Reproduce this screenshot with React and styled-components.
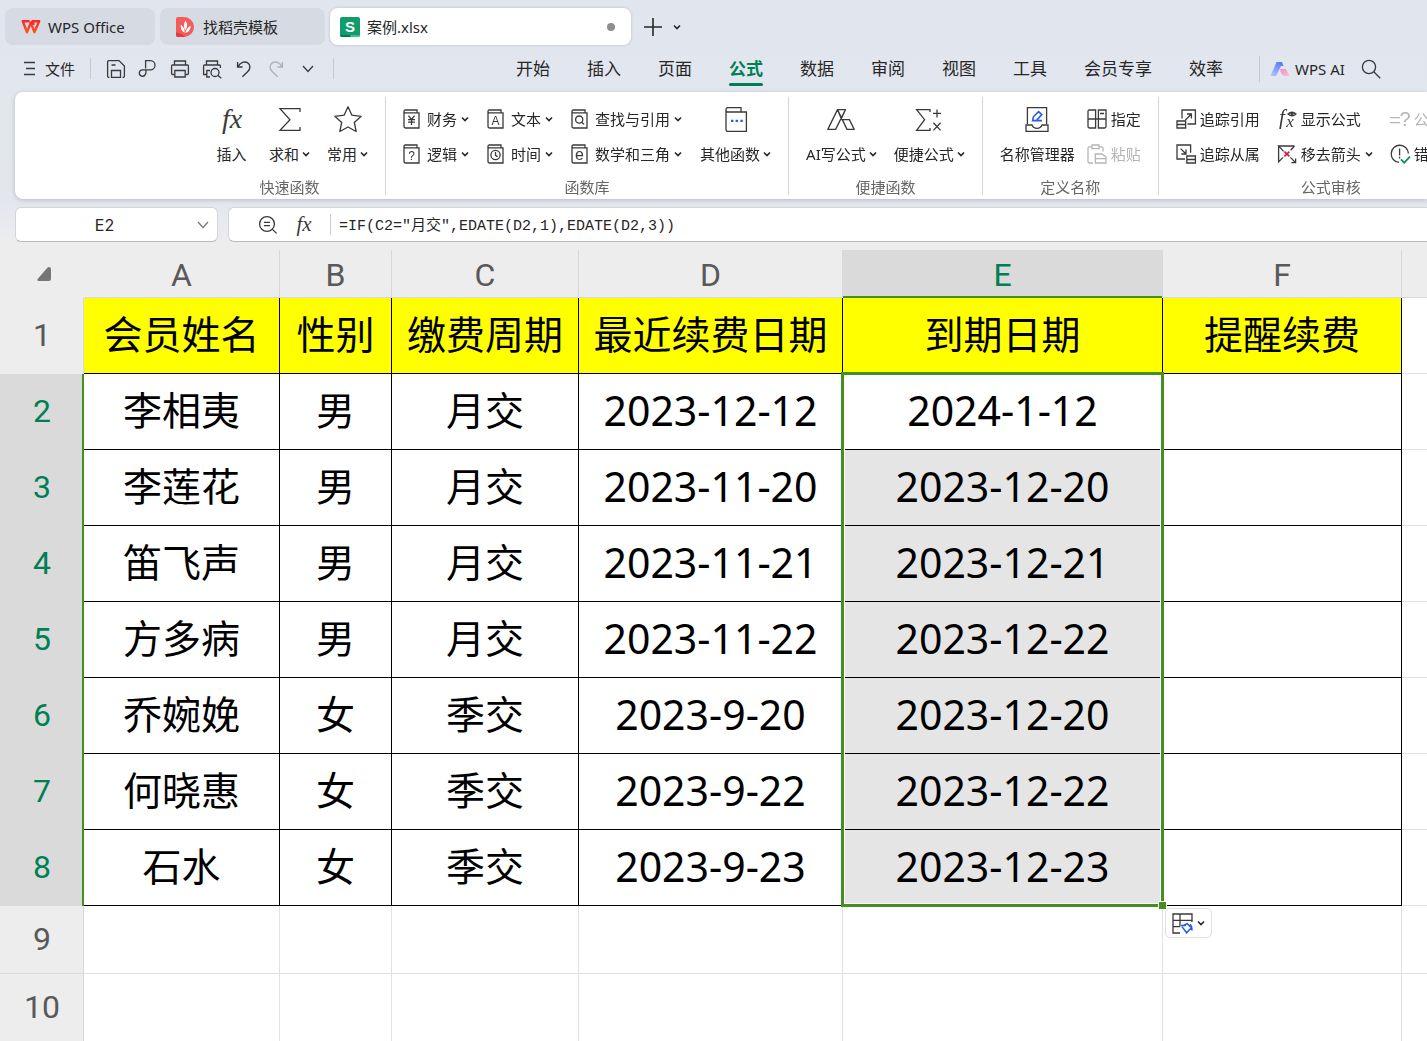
import styled, { createGlobalStyle, css } from "styled-components"

const GlobalStyle = createGlobalStyle`
    :root {
        --font-ui: "Noto Sans", "Noto Sans CJK SC", sans-serif;
        --color-text: #262626;
        --color-muted: #666666;
        --color-line: #d4d4d6;
        --color-green: #43901f;
        --color-teal: #007f55;
        --color-blue: #2b5ce6;
    }

    * {
        box-sizing: border-box;
    }

    body {
        margin: 0;
        overflow: hidden;
        background-color: #ededed;
        color: var(--color-text);
        font-family: var(--font-ui);
    }

    button, input {
        margin: 0;
        padding: 0;
        border: none;
        background: none;
        color: inherit;
        font: inherit;
    }

    svg {
        display: block;
        flex-shrink: 0;
        fill: none;
        overflow: visible;
    }
`

/* ---------- icons ---------- */

const Svg = ({ w = 20, h = 20, color = "#3a3a3a", sw = 1.3, children }) => (
    <svg width={w} height={h} viewBox={`0 0 ${w} ${h}`} stroke={color} strokeWidth={sw} aria-hidden="true">
        {children}
    </svg>
)

const Glyph = ({ x, y, size = 11, italic, color = "#3a3a3a", family = "Liberation Sans, sans-serif", children, ...rest }) => (
    <text
        x={x}
        y={y}
        fontSize={size}
        fontFamily={family}
        fontStyle={italic ? "italic" : "normal"}
        fill={color}
        stroke="none"
        textAnchor="middle"
        {...rest}
    >
        {children}
    </text>
)

const serif = "Liberation Serif, serif"

const Caret = () => (
    <Svg w={8} h={8} color="#262626" sw={1.6}><path d="M1 2.5 4 5.5 7 2.5" /></Svg>
)

const Chevron = ({ color = "#3a3a3a" }) => (
    <Svg w={12} h={8} color={color}><path d="M1 1 6 6.5 11 1" /></Svg>
)

const WpsLogo = () => (
    <Svg w={20} h={15} sw={2.4} color="url(#wpsRed)">
        <defs>
            <linearGradient id="wpsRed" x1="0" y1="0" x2="0" y2="15" gradientUnits="userSpaceOnUse">
                <stop offset="0" stopColor="#ff1f2d" />
                <stop offset="1" stopColor="#ff5a14" />
            </linearGradient>
        </defs>
        <path d="M8.6 2.2H1.8L6 13.2 9.8 3.6 13.4 13.2 18.2 2.2H11.4L12.8 6" strokeLinejoin="round" />
    </Svg>
)

const DocerLogo = () => (
    <Svg w={18} h={20} color="none">
        <path d="M0 2Q0 0 2 0H8A10 10 0 0 1 8 20H2Q0 20 0 18Z" fill="#f45b5b" />
        <path d="M0 15.5Q6 16 9 20H2Q0 20 0 18Z" fill="#e03c44" />
        <path d="M9.4 3.6C12.4 7.5 11 11.5 9 13.5 7.6 10 7.6 7 9.4 3.6Z" fill="#fff" />
        <path d="M4.8 7.8C7.6 9.8 8.6 12 8.8 15.8 5.2 14 4.6 11 4.8 7.8Z" fill="#fff" />
        <path d="M14.8 8.4C14.8 12 13 15 9.4 15.8 10 12.4 12 10.2 14.8 8.4Z" fill="#fff" />
    </Svg>
)

const SheetLogo = () => (
    <Svg w={20} h={20} color="none">
        <rect width="20" height="20" rx="2" fill="#119d6b" />
        <path d="M0 18H10L11 20H2Q0 20 0 18Z" fill="#007f4c" />
        <path d="M10 18H20Q20 20 18 20H11Z" fill="#43bd8c" />
        <Glyph x={10} y={14.5} size={15} color="#fff" fontWeight="700">S</Glyph>
    </Svg>
)

const MenuLines = () => (
    <Svg w={12} h={16}><path d="M0 1.5H11M2 7.5H11M0 13.5H11" /></Svg>
)

const SaveIcon = () => (
    <Svg>
        <path d="M3.5 18.3H2.6Q1.6 18.3 1.6 17.3V2.6Q1.6 1.6 2.6 1.6H13L18.4 7V17.3Q18.4 18.3 17.4 18.3H16.5" />
        <path d="M5.5 18.3V11.5H14.5V18.3ZM5.5 6H9.5" />
    </Svg>
)

const ShareIcon = () => (
    <Svg>
        <path d="M7.6 9.6V1.6H12.4A4.6 4.6 0 0 1 12.4 10.8H4.8A3.2 3.2 0 1 0 7.4 15.4Q8 14.4 8 12.8V10.8" strokeLinejoin="round" />
    </Svg>
)

const PrintIcon = () => (
    <Svg>
        <path d="M4.5 6V2H15.5V6M4.5 15.5H2.6Q1.6 15.5 1.6 14.5V7Q1.6 6 2.6 6H17.4Q18.4 6 18.4 7V14.5Q18.4 15.5 17.4 15.5H15.5" />
        <path d="M4.8 11.5H15.2V18H4.8Z" />
    </Svg>
)

const PreviewIcon = () => (
    <Svg>
        <path d="M4.5 6V2H15.5V6M4.5 15.5H1.6V7Q1.6 6 2.6 6H17.4Q18.4 6 18.4 7V9M8 18H4.8V11.5H8" />
        <circle cx="13" cy="13.5" r="4" />
        <path d="M16 16.5 19.3 19.3" />
    </Svg>
)

const UndoIcon = ({ flip, color }) => (
    <Svg color={color} sw={1.4}>
        <g transform={flip ? "translate(20 0) scale(-1 1)" : undefined}>
            <path d="M3.6 3V8H8.6M4 7.6C6.4 3.4 10.6 2 13.4 3.6 17 5.8 16.4 10 13.8 12.6L8.4 17.8" />
        </g>
    </Svg>
)

const PlusIcon = () => (
    <Svg color="#262626" sw={1.6}><path d="M1 10H19M10 1V19" /></Svg>
)

const AiLogo = () => (
    <Svg w={20} h={16} color="none">
        <defs>
            <linearGradient id="aiBlue" x1="0" y1="1" x2="0.7" y2="0">
                <stop offset="0" stopColor="#b9c7fb" />
                <stop offset="1" stopColor="#5b7cf7" />
            </linearGradient>
            <linearGradient id="aiPink" x1="0" y1="0" x2="1" y2="1">
                <stop offset="0" stopColor="#e58be8" />
                <stop offset="1" stopColor="#ffc2bd" />
            </linearGradient>
        </defs>
        <path d="M6.5 1H12L13.5 5H11L6 15H0.5Z" fill="url(#aiBlue)" />
        <path d="M10 8H16L19.5 15H14.5Q11 13.5 10 8Z" fill="url(#aiPink)" />
    </Svg>
)

const SearchIcon = () => (
    <Svg><circle cx="8" cy="8" r="6.6" /><path d="M12.8 12.8 19.2 19.2" /></Svg>
)

const FxIcon = () => (
    <Svg w={30} h={30}><Glyph x={15} y={23} size={28} italic family={serif}>fx</Glyph></Svg>
)

const SumIcon = () => (
    <Svg w={30} h={30}><path d="M25 7V3.6H5L15 14.7 5 25.4H25V22" /></Svg>
)

const StarIcon = () => (
    <Svg w={30} h={30}>
        <path d="M15 1.8 18.9 10.2 28.2 11.3 21.3 17.5 23.2 26.5 15 22 6.8 26.5 8.7 17.5 1.8 11.3 11.1 10.2Z" strokeLinejoin="round" />
    </Svg>
)

const BookIcon = ({ children }) => (
    <Svg>
        <path d="M1 2.6V17.6Q1 19 2.4 19H16V3.8H2.2Q1 3.8 1 2.6 1 1 2.4 1H14V3.8" />
        {children}
    </Svg>
)

const OtherIcon = () => (
    <Svg w={30} h={30}>
        <path d="M5 4.6V24.5Q5 26.4 7 26.4H25.4V7H6.4Q5 7 5 4.8 5 2.6 7 2.6H20V7" />
        <path d="M10 15.8H12.4M14.6 15.8H17M19.4 15.8H21.8" stroke="#2b5ce6" strokeWidth="2.2" />
    </Svg>
)

const AiWriteIcon = () => (
    <Svg w={30} h={30}>
        <path d="M11.5 4.6H19.5L9.6 24.4H1.8L11.5 4.6 21 24.4H28.2L23.4 14.6H15.6L11.5 4.6M15 14.5 19.5 4.6" strokeLinejoin="round" />
    </Svg>
)

const QuickIcon = () => (
    <Svg w={30} h={30}>
        <path d="M16 7V4.6H2.6L10.6 14.7 2.6 25.4H16V23M19 8.4H27M23 4.4V12.4M19.4 17.8 26.6 25.4M26.6 17.8 19.4 25.4" />
    </Svg>
)

const NameIcon = () => (
    <Svg w={30} h={30}>
        <path d="M5.4 19V2.6H24.6V19M4 20H10Q11.4 23.4 15 23.4T20 20H26V26.4H4Z" />
        <path d="M10.6 15.6 11.4 11.8 16.6 6.6 19.8 9.6 14.4 15.6ZM14.4 15.6H20" stroke="#2b5ce6" strokeWidth="1.6" />
    </Svg>
)

const AssignIcon = () => (
    <Svg>
        <path d="M8 1H2.4Q1 1 1 2.4V10H8.6V1ZM1 10V17.6Q1 19 2.4 19H8.6V10M11.4 1H19V10H11.4ZM8.6 10H11.4M11.4 10V19H17.6Q19 19 19 17.6V10M13 4.5H17" />
    </Svg>
)

const PasteIcon = () => (
    <Svg color="#b5b5b5">
        <path d="M5 2.8H2.4Q1 2.8 1 4.2V17.6Q1 19 2.4 19H6M12 2.8H14.6Q16 2.8 16 4.2V7.6M5 1H12V4.6H5Z" />
        <path d="M8.4 10H15L19 13V19H8.4ZM8.4 14.6H19" />
    </Svg>
)

const TraceInIcon = () => (
    <Svg>
        <path d="M6 9.5V1H19.4V15H11.5M1 12H9.6V19H1ZM1 15.5H9.6M9.4 11 15.4 5M11 5H15.4V9.6" />
    </Svg>
)

const TraceOutIcon = () => (
    <Svg>
        <path d="M9 15H1V1H14.6V8.8M10.8 12H19.4V19H10.8ZM10.8 15.5H19.4M4.6 4.6 10 10M10 5.4V10H5.4" />
    </Svg>
)

const ShowFormulaIcon = () => (
    <Svg>
        <Glyph x={5} y={15} size={21} italic family={serif}>f</Glyph>
        <Glyph x={13} y={18} size={17} italic family={serif}>x</Glyph>
        <path d="M11 5Q15 1.4 19 5 15 8.6 11 5Z" />
        <circle cx="15" cy="5" r="1" />
    </Svg>
)

const RemoveArrowIcon = () => (
    <Svg>
        <path d="M17.5 2H1.6L6.6 7.4M17.5 2 13.6 6.2M1.6 2V18L6 13.4M13.4 13.4 18.6 18.6M18.6 14.4V18.6H14.4" />
        <path d="M7.4 7.6 12.4 12.4M12.4 7.6 7.4 12.4" stroke="#d9143c" strokeWidth="1.6" />
    </Svg>
)

const EvaluateIcon = () => (
    <Svg color="#b5b5b5">
        <path d="M0 8.6H10M0 13.6H10" />
        <Glyph x={15} y={16.5} size={20} color="#b5b5b5">?</Glyph>
    </Svg>
)

const ErrorCheckIcon = () => (
    <Svg>
        <path d="M9 18.4A8.6 8.6 0 1 1 18.4 9.6M9.6 4.6V11.4M9.6 12.8V14.4" />
        <path d="M11 15.4 14.2 18.8 20 12.6" stroke="#0d8a5f" strokeWidth="1.8" />
    </Svg>
)

const ZoomIcon = () => (
    <Svg><circle cx="9" cy="9" r="7.4" /><path d="M14.4 14.4 18.6 18.4M6 7.4H12M6 10.6H12" /></Svg>
)

const PasteOptionsIcon = () => (
    <Svg w={21} h={21}>
        <path d="M8 20H1V1H20V9M1 7.4H20M1 13.6H8M8 1V13.6" />
        <path d="M9 12.4H14M10 13.6 14.6 19.8 19.4 14.8 15.2 10.6 11.4 12.4M18 11.4Q20 12.6 20 17.6" stroke="#2b5ce6" strokeWidth="1.5" />
    </Svg>
)

/* ---------- title bar ---------- */

const Window = styled.div`
    height: 100vh;
    display: flex;
    flex-direction: column;
    background: linear-gradient(#e1e6ee 0, #e3e6ef 200px, #ededed 244px);
`

const TitleBar = styled.header`
    display: flex;
    align-items: center;
    gap: 5px;
    padding: 8px 5px 0;
`

const FileTab = styled.button`
    display: flex;
    align-items: center;
    gap: ${({ $gap = 7 }) => $gap}px;
    width: ${({ $width }) => $width}px;
    height: 37px;
    padding: 0 ${({ $active }) => ($active ? "16px 0 10px" : "16px")};
    border-radius: 8px;
    background-color: ${({ $active }) => ($active ? "#ffffff" : "#d6dae2")};
    box-shadow: ${({ $active }) => ($active ? "0 0 3px #b4b8c2" : "none")};
    font-size: 15px;
    line-height: 20px;
    white-space: nowrap;

    & i {
        width: 8px;
        height: 8px;
        margin-left: auto;
        border-radius: 50%;
        background-color: #8f8f8f;
    }
`

const NewTab = styled.button`
    display: flex;
    align-items: center;
    padding-left: ${({ $pad = 0 }) => $pad}px;
`

/* ---------- menu ---------- */

const MenuBar = styled.nav`
    display: flex;
    align-items: center;
    height: 47px;
    padding-left: 24px;
    white-space: nowrap;
`

const FileButton = styled.button`
    display: flex;
    align-items: center;
    gap: 9px;
    padding-right: 15px;
    font-size: 15px;
`

const Divider = styled.span`
    width: 1px;
    height: ${({ $height = 21 }) => $height}px;
    background-color: #c8cad0;
`

const QuickTools = styled.div`
    display: flex;
    align-items: center;
    gap: 12px;
    padding: 0 15px;
`

const IconButton = styled.button`
    display: flex;
    align-items: center;
    justify-content: center;
    min-width: 20px;
`

const MenuTabs = styled.div`
    display: flex;
    gap: 37px;
    padding: 0 36px 0 182px;
`

const MenuTab = styled.button`
    position: relative;
    font-size: 17px;
    line-height: 24px;

    ${({ $active }) => $active && css`
        color: var(--color-teal);
        font-weight: 700;

        &::after {
            content: "";
            position: absolute;
            left: 0;
            right: 0;
            bottom: -5px;
            height: 3px;
            border-radius: 2px;
            background-color: var(--color-teal);
        }
    `}
`

const AiButton = styled.button`
    display: flex;
    align-items: center;
    gap: 5px;
    padding: 0 16px 0 10px;
    font-size: 15px;
`

/* ---------- ribbon ---------- */

const Ribbon = styled.section`
    display: flex;
    height: 107px;
    margin-left: 15px;
    padding: 5px 0 4px 179px;
    overflow: hidden;
    border-radius: 8px 0 0 8px;
    background-color: #ffffff;
`

const RibbonShadow = styled.div`
    filter: drop-shadow(0 1px 2px #b4b8c2);
`

const Group = styled.div`
    display: flex;
    flex-direction: column;
    flex-shrink: 0;
    justify-content: space-between;
    padding: 8px 17px 0;
    border-right: 1px solid var(--color-line);
`

const GroupItems = styled.div`
    display: flex;
    gap: ${({ $gap = 17 }) => $gap}px;
`

const GroupLabel = styled.div`
    color: var(--color-muted);
    font-size: 15px;
    line-height: 16px;
    text-align: center;
`

const Stack = styled.div`
    display: flex;
    flex-direction: column;
    align-items: flex-start;
    gap: 15px;
    padding-top: 4px;
`

const BigButton = styled.button`
    display: flex;
    flex-direction: column;
    align-items: center;
    gap: 9px;
    min-width: 41px;
    font-size: 15px;
    line-height: 20px;
    white-space: nowrap;

    & span {
        display: flex;
        align-items: center;
        gap: 3px;
    }
`

const SmallButton = styled.button`
    display: flex;
    align-items: center;
    gap: 4px;
    height: 20px;
    color: ${({ disabled }) => (disabled ? "#b5b5b5" : "inherit")};
    font-size: 15px;
    line-height: 20px;
    white-space: nowrap;
`

/* ---------- formula bar ---------- */

const FormulaRow = styled.div`
    display: flex;
    gap: 10px;
    padding: 8px 0 8px 15px;
`

const Field = styled.div`
    display: flex;
    align-items: center;
    height: 35px;
    border: 1px solid #d3d5da;
    border-bottom-color: #b9bbc0;
    border-radius: 6px;
    background-color: #ffffff;
`

const NameField = styled(Field)`
    width: 203px;
    padding-right: 4px;

    & input {
        flex: 1;
        min-width: 0;
        font-family: Inter, sans-serif;
        font-size: 16px;
        text-align: center;
    }
`

const FormulaField = styled(Field)`
    flex: 1;
    gap: 14px;
    padding-left: 29px;
    border-right: none;
    border-radius: 6px 0 0 6px;

    & input {
        flex: 1;
        margin-left: -6px;
        padding-bottom: 2px;
        font-family: "Liberation Mono", "Noto Sans CJK SC", monospace;
        font-size: 15px;
    }
`

/* ---------- sheet ---------- */

const SheetWrap = styled.main`
    flex: 1;
    overflow: hidden;
`

const Sheet = styled.table`
    width: 100%;
    table-layout: fixed;
    border-collapse: separate;
    border-spacing: 0;
    background-color: #ffffff;
`

const Corner = styled.th`
    height: 48px;
    padding: 0 33px 0 0;
    background-color: #ededed;

    & svg {
        margin-left: auto;
    }
`

const HeadCell = styled.th`
    border: 0 solid #d8d8d8;
    background-color: ${({ $selected }) => ($selected ? "#dadada" : "#ededed")};
    color: ${({ $selected }) => ($selected ? "var(--color-teal)" : "#595959")};
    font-family: Roboto, sans-serif;
    font-size: 32px;
    font-weight: 400;
`

const ColHead = styled(HeadCell)`
    height: 48px;
    padding: 2px 0 0;
    border-right-width: 1px;
    box-shadow: inset 0 ${({ $selected }) => ($selected ? "-2px var(--color-green)" : "-1px #d8d8d8")};

    &:last-child {
        border-right-width: 0;
    }
`

const RowHead = styled(HeadCell)`
    height: ${({ $height }) => $height}px;
    padding: 0 0 2px;
    border-bottom-width: ${({ $selected, $plain }) => ($selected || $plain ? 0 : 1)}px;
    box-shadow: inset ${({ $selected }) => ($selected ? "-2px 0 var(--color-green)" : "-1px 0 #d8d8d8")};
`

const Cell = styled.td`
    position: relative;
    padding: 0 0 3px;
    border-right: 1px solid #e1e1e1;
    border-bottom: 1px solid #e1e1e1;
    color: #000000;
    font-family: "Noto Sans", "Noto Sans CJK SC", sans-serif;
    font-size: ${({ $date }) => ($date ? 41 : 39)}px;
    line-height: 48px;
    text-align: center;
    white-space: nowrap;

    &:last-child {
        border-right: none;
    }

    ${({ $filled }) => $filled && css`
        border-color: #000000;
    `}

    ${({ $title }) => $title && css`
        background-color: #ffff00;
    `}

    ${({ $shaded }) => $shaded && css`
        background-color: #e5e5e5;
    `}
`

const Selection = styled.div`
    position: absolute;
    z-index: 1;
    top: -2px;
    left: -2px;
    width: calc(100% + 4px);
    height: ${({ $rows }) => $rows * 76 + 3}px;
    border: 3px solid var(--color-green);
    box-shadow: inset 0 0 0 1px #ffffff;
    pointer-events: none;

    &::after {
        content: "";
        position: absolute;
        right: -6px;
        bottom: -6px;
        width: 7px;
        height: 7px;
        border: 1px solid #ffffff;
        background-color: var(--color-green);
    }
`

const PasteOptions = styled.button`
    position: absolute;
    top: calc(100% + 4px);
    left: calc(100% + 4px);
    display: flex;
    align-items: center;
    gap: 4px;
    height: 30px;
    padding: 0 6px;
    border: 1px solid #e0e0e0;
    border-radius: 5px;
    background-color: #ffffff;
    pointer-events: auto;
`

/* ---------- data ---------- */

const menus = ["开始", "插入", "页面", "公式", "数据", "审阅", "视图", "工具", "会员专享", "效率"]

const columns = [
    { name: "A", width: 196 },
    { name: "B", width: 112 },
    { name: "C", width: 187 },
    { name: "D", width: 264 },
    { name: "E", width: 320 },
    { name: "F", width: 239 },
    { name: "", width: null },
]

const rows = [
    ["会员姓名", "性别", "缴费周期", "最近续费日期", "到期日期", "提醒续费"],
    ["李相夷", "男", "月交", "2023-12-12", "2024-1-12", ""],
    ["李莲花", "男", "月交", "2023-11-20", "2023-12-20", ""],
    ["笛飞声", "男", "月交", "2023-11-21", "2023-12-21", ""],
    ["方多病", "男", "月交", "2023-11-22", "2023-12-22", ""],
    ["乔婉娩", "女", "季交", "2023-9-20", "2023-12-20", ""],
    ["何晓惠", "女", "季交", "2023-9-22", "2023-12-22", ""],
    ["石水", "女", "季交", "2023-9-23", "2023-12-23", ""],
    [],
    [],
]

const Big = ({ icon, label, caret = true }) => (
    <BigButton>
        {icon}
        <span>{label}{caret && <Caret />}</span>
    </BigButton>
)

const Small = ({ icon, label, caret, disabled }) => (
    <SmallButton disabled={disabled}>
        {icon}
        {label}
        {caret && <Caret />}
    </SmallButton>
)

function Tabs() {
    return (
        <TitleBar>
            <FileTab $width={150}><WpsLogo />WPS Office</FileTab>
            <FileTab $width={165} $gap={9}><DocerLogo />找稻壳模板</FileTab>
            <FileTab $width={301} $active><SheetLogo />案例.xlsx<i /></FileTab>
            <NewTab $pad={7} aria-label="新建"><PlusIcon /></NewTab>
            <NewTab $pad={5} aria-label="标签列表"><Caret /></NewTab>
        </TitleBar>
    )
}

function Menu() {
    return (
        <MenuBar>
            <FileButton><MenuLines />文件</FileButton>
            <Divider />
            <QuickTools>
                <IconButton aria-label="保存"><SaveIcon /></IconButton>
                <IconButton aria-label="输出"><ShareIcon /></IconButton>
                <IconButton aria-label="打印"><PrintIcon /></IconButton>
                <IconButton aria-label="打印预览"><PreviewIcon /></IconButton>
                <IconButton aria-label="撤销"><UndoIcon /></IconButton>
                <IconButton aria-label="恢复" disabled><UndoIcon flip color="#b0b2b8" /></IconButton>
                <IconButton aria-label="更多"><Chevron /></IconButton>
            </QuickTools>
            <Divider />
            <MenuTabs>
                {menus.map((name) => (
                    <MenuTab key={name} $active={name === "公式"}>{name}</MenuTab>
                ))}
            </MenuTabs>
            <Divider $height={26} />
            <AiButton><AiLogo />WPS AI</AiButton>
            <IconButton aria-label="搜索"><SearchIcon /></IconButton>
        </MenuBar>
    )
}

function RibbonPanel() {
    return (
        <RibbonShadow>
            <Ribbon>
                <Group>
                    <GroupItems>
                        <Big icon={<FxIcon />} label="插入" caret={false} />
                        <Big icon={<SumIcon />} label="求和" />
                        <Big icon={<StarIcon />} label="常用" />
                    </GroupItems>
                    <GroupLabel>快速函数</GroupLabel>
                </Group>
                <Group>
                    <GroupItems $gap={18}>
                        <Stack>
                            <Small icon={<BookIcon><path d="M5.4 6.6 8.5 10.4 11.6 6.6M8.5 10.4V16M5 10.6H12M5 13.2H12" /></BookIcon>} label="财务" caret />
                            <Small icon={<BookIcon><Glyph x={8.5} y={15.5} size={12}>?</Glyph></BookIcon>} label="逻辑" caret />
                        </Stack>
                        <Stack>
                            <Small icon={<BookIcon><Glyph x={8.5} y={15.5} size={12}>A</Glyph></BookIcon>} label="文本" caret />
                            <Small icon={<BookIcon><circle cx="8.5" cy="11" r="4.6" /><path d="M8.5 8V11.4L10.6 12.6" /></BookIcon>} label="时间" caret />
                        </Stack>
                        <Stack>
                            <Small icon={<BookIcon><circle cx="8.2" cy="10.6" r="3.6" /><path d="M10.8 13.2 13 15.4" /></BookIcon>} label="查找与引用" caret />
                            <Small icon={<BookIcon><Glyph x={8.5} y={15.5} size={16}>e</Glyph></BookIcon>} label="数学和三角" caret />
                        </Stack>
                        <Big icon={<OtherIcon />} label="其他函数" />
                    </GroupItems>
                    <GroupLabel>函数库</GroupLabel>
                </Group>
                <Group>
                    <GroupItems>
                        <Big icon={<AiWriteIcon />} label="AI写公式" />
                        <Big icon={<QuickIcon />} label="便捷公式" />
                    </GroupItems>
                    <GroupLabel>便捷函数</GroupLabel>
                </Group>
                <Group>
                    <GroupItems $gap={12}>
                        <Big icon={<NameIcon />} label="名称管理器" caret={false} />
                        <Stack>
                            <Small icon={<AssignIcon />} label="指定" />
                            <Small icon={<PasteIcon />} label="粘贴" disabled />
                        </Stack>
                    </GroupItems>
                    <GroupLabel>定义名称</GroupLabel>
                </Group>
                <Group>
                    <GroupItems>
                        <Stack>
                            <Small icon={<TraceInIcon />} label="追踪引用" />
                            <Small icon={<TraceOutIcon />} label="追踪从属" />
                        </Stack>
                        <Stack>
                            <Small icon={<ShowFormulaIcon />} label="显示公式" />
                            <Small icon={<RemoveArrowIcon />} label="移去箭头" caret />
                        </Stack>
                        <Stack>
                            <Small icon={<EvaluateIcon />} label="公式求值" disabled />
                            <Small icon={<ErrorCheckIcon />} label="错误检查" caret />
                        </Stack>
                    </GroupItems>
                    <GroupLabel>公式审核</GroupLabel>
                </Group>
            </Ribbon>
        </RibbonShadow>
    )
}

function FormulaBar() {
    return (
        <FormulaRow>
            <NameField>
                <input aria-label="名称框" defaultValue="E2" />
                <IconButton aria-label="展开名称框"><Chevron color="#7a7a7a" /></IconButton>
            </NameField>
            <FormulaField>
                <IconButton aria-label="查看公式"><ZoomIcon /></IconButton>
                <IconButton aria-label="插入函数">
                    <Svg w={24} h={24}><Glyph x={12} y={18} size={21} italic family={serif}>fx</Glyph></Svg>
                </IconButton>
                <Divider />
                <input aria-label="编辑栏" defaultValue={'=IF(C2="月交",EDATE(D2,1),EDATE(D2,3))'} />
            </FormulaField>
        </FormulaRow>
    )
}

function Grid() {
    return (
        <SheetWrap>
            <Sheet>
                <colgroup>
                    <col width={84} />
                    {columns.map((c) => <col key={c.name} width={c.width ?? undefined} />)}
                </colgroup>
                <thead>
                    <tr>
                        <Corner aria-label="全选">
                            <Svg w={14} h={14} color="none"><path d="M12 0Q14 0 14 2V12Q14 14 12 14H1.5Q-0.5 13.5 1 11.5L10 1.2Q11 0 12 0Z" fill="#757575" /></Svg>
                        </Corner>
                        {columns.map((c) => (
                            <ColHead key={c.name} scope="col" $selected={c.name === "E"}>{c.name}</ColHead>
                        ))}
                    </tr>
                </thead>
                <tbody>
                    {rows.map((row, r) => {
                        const selected = r >= 1 && r <= 7
                        return (
                            <tr key={r}>
                                <RowHead scope="row" $height={r > 7 ? 68 : 76} $selected={selected} $plain={r === 0}>{r + 1}</RowHead>
                                {columns.map((c, i) => (
                                    <Cell
                                        key={c.name}
                                        $filled={row.length > 0 && i < 6}
                                        $title={r === 0 && i < 6}
                                        $date={r > 0 && (i === 3 || i === 4)}
                                        $shaded={r > 1 && r <= 7 && i === 4}
                                    >
                                        {row[i]}
                                        {r === 1 && i === 4 && (
                                            <Selection $rows={7}>
                                                <PasteOptions aria-label="粘贴选项"><PasteOptionsIcon /><Caret /></PasteOptions>
                                            </Selection>
                                        )}
                                    </Cell>
                                ))}
                            </tr>
                        )
                    })}
                </tbody>
            </Sheet>
        </SheetWrap>
    )
}

export default function App() {
    return (
        <Window>
            <GlobalStyle />
            <Tabs />
            <Menu />
            <RibbonPanel />
            <FormulaBar />
            <Grid />
        </Window>
    )
}
